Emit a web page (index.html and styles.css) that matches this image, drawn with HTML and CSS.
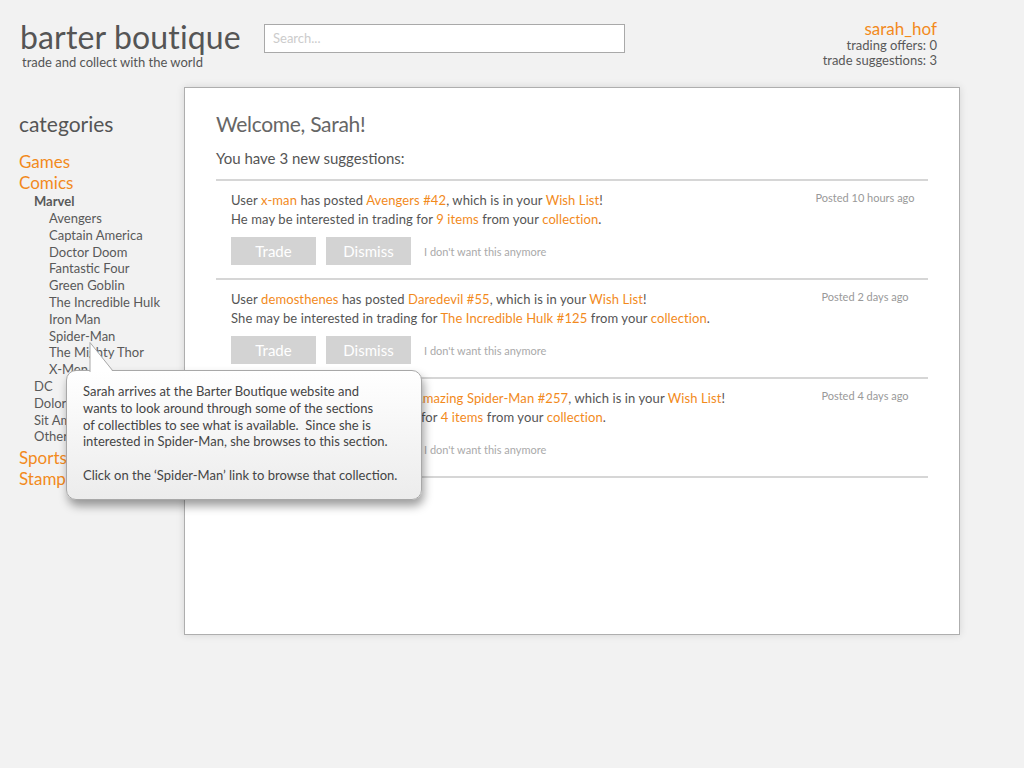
FILE: index.html
```html
<!DOCTYPE html>
<html>
<head>
<meta charset="utf-8">
<link rel="stylesheet" href="styles.css">
</head>
<body>
<header class="top">
  <div class="brand">
    <div class="logo">barter boutique</div>
    <div class="tagline">trade and collect with the world</div>
  </div>
  <div class="search">Search...</div>
  <div class="user">
    <div class="username">sarah_hof</div>
    <div class="stat">trading offers: 0</div>
    <div class="stat">trade suggestions: 3</div>
  </div>
</header>
<div class="main">
  <nav class="sidebar">
    <div class="cat-title">categories</div>
    <div class="cat">Games</div>
    <div class="cat">Comics</div>
    <div class="sub bold">Marvel</div>
    <div class="subsub">Avengers</div>
    <div class="subsub">Captain America</div>
    <div class="subsub">Doctor Doom</div>
    <div class="subsub">Fantastic Four</div>
    <div class="subsub">Green Goblin</div>
    <div class="subsub">The Incredible Hulk</div>
    <div class="subsub">Iron Man</div>
    <div class="subsub">Spider-Man</div>
    <div class="subsub">The Mighty Thor</div>
    <div class="subsub">X-Men</div>
    <div class="sub">DC</div>
    <div class="sub">Dolorem</div>
    <div class="sub">Sit Amet</div>
    <div class="sub">Other</div>
    <div class="cat cat-sports">Sports</div>
    <div class="cat">Stamps</div>
  </nav>
  <section class="panel">
    <h1 class="welcome">Welcome, Sarah!</h1>
    <p class="intro">You have 3 new suggestions:</p>
    <div class="list">
      <div class="item">
        <div class="item-body">
          <div class="line">User <span class="o">x-man</span> has posted <span class="o">Avengers #42</span>, which is in your <span class="o">Wish List</span>!</div>
          <div class="line">He may be interested in trading for <span class="o">9 items</span> from your <span class="o">collection</span>.</div>
          <div class="actions">
            <span class="btn">Trade</span>
            <span class="btn">Dismiss</span>
            <span class="nothanks">I don't want this anymore</span>
          </div>
        </div>
        <div class="posted">Posted 10 hours ago</div>
      </div>
      <div class="item">
        <div class="item-body">
          <div class="line">User <span class="o">demosthenes</span> has posted <span class="o">Daredevil #55</span>, which is in your <span class="o">Wish List</span>!</div>
          <div class="line">She may be interested in trading for <span class="o">The Incredible Hulk #125</span> from your <span class="o">collection</span>.</div>
          <div class="actions">
            <span class="btn">Trade</span>
            <span class="btn">Dismiss</span>
            <span class="nothanks">I don't want this anymore</span>
          </div>
        </div>
        <div class="posted">Posted 2 days ago</div>
      </div>
      <div class="item">
        <div class="item-body">
          <div class="line">User <span class="o">web_head</span> has posted <span class="o">The Amazing Spider-Man #257</span>, which is in your <span class="o">Wish List</span>!</div>
          <div class="line">She may be interested in trading for <span class="o">4 items</span> from your <span class="o">collection</span>.</div>
          <div class="actions">
            <span class="btn">Trade</span>
            <span class="btn">Dismiss</span>
            <span class="nothanks">I don't want this anymore</span>
          </div>
        </div>
        <div class="posted">Posted 4 days ago</div>
      </div>
    </div>
  </section>
</div>
<div class="tooltip">
  <svg class="tip-arrow" width="26" height="30" viewBox="0 0 26 30">
    <polygon points="1,0 1,30 24,30" fill="#ffffff"/>
    <polyline points="1,30 1,0.5 24,29" fill="none" stroke="#a8a8a8" stroke-width="1"/>
  </svg>
  <p>Sarah arrives at the Barter Boutique website and<br>wants to look around through some of the sections<br>of collectibles to see what is available.&nbsp; Since she is<br>interested in Spider-Man, she browses to this section.</p>
  <p>Click on the ‘Spider-Man’ link to browse that collection.</p>
</div>
</body>
</html>
```
FILE: styles.css
```css
* { box-sizing: border-box; }
html, body { margin: 0; padding: 0; }
body {
  background: #f2f2f2;
  font-family: "Lato", "Open Sans", sans-serif;
  color: #595959;
  width: 1024px;
  height: 768px;
  position: relative;
  overflow: hidden;
}
.top {
  display: flex;
  align-items: flex-start;
  height: 87px;
  padding: 0 87px 0 20px;
}
.brand { width: 244px; padding-top: 18px; }
.logo { font-size: 32px; line-height: 38px; color: #555; white-space: nowrap; letter-spacing: 0.15px; }
.tagline { font-size: 13px; line-height: 15px; margin-top: -1px; padding-left: 2px; color: #555; white-space: nowrap; }
.search {
  margin-top: 24px;
  width: 361px;
  height: 29px;
  background: #fff;
  border: 1px solid #a9a9a9;
  color: #ccc;
  font-size: 13px;
  line-height: 27px;
  padding-left: 8px;
}
.user { margin-left: auto; text-align: right; padding-top: 20px; }
.username { font-size: 17px; line-height: 18px; color: #f28a1c; }
.stat { font-size: 13px; line-height: 15px; }

.main { display: flex; align-items: flex-start; }
.sidebar { width: 184px; padding: 24px 0 0 19px; }
.cat-title { font-size: 21px; line-height: 26px; margin-bottom: 14px; color: #555; }
.cat { font-size: 17px; line-height: 21px; color: #f28a1c; }
.cat-sports { margin-top: 2px; }
.sub { font-size: 13px; line-height: 16.8px; padding-left: 15px; }
.sub.bold { font-weight: bold; line-height: 17px; }
.subsub { font-size: 13px; line-height: 16.8px; padding-left: 30px; }

.panel {
  width: 776px;
  height: 548px;
  background: #fff;
  border: 1px solid #aeaeae;
  box-shadow: 0 0 8px rgba(0, 0, 0, 0.12);
  padding: 23px 31px 0 31px;
}
.welcome { margin: 0; font-weight: normal; font-size: 21px; line-height: 26px; color: #666; letter-spacing: -0.3px; }
.intro { margin: 12px 0 12px; font-size: 15px; line-height: 18px; color: #555; }
.list { border-top: 2px solid #d6d6d6; }
.item {
  display: flex;
  border-bottom: 2px solid #d6d6d6;
  padding: 10px 0 13px 15px;
}
.item-body { flex: 1; }
.line { font-size: 13px; line-height: 19px; color: #555; white-space: nowrap; letter-spacing: 0.1px; }
.o { color: #f28a1c; }
.actions { display: flex; align-items: center; gap: 10px; margin-top: 8px; }
.btn {
  width: 85px;
  height: 28px;
  background: #d3d3d3;
  color: #fff;
  font-size: 15px;
  line-height: 28px;
  text-align: center;
}
.nothanks { font-size: 11px; color: #aaa; margin-left: 3px; }
.posted { width: 126px; text-align: center; font-size: 11px; line-height: 13px; color: #999; }

.tooltip {
  position: absolute;
  left: 66px;
  top: 370px;
  width: 356px;
  height: 130px;
  border: 1px solid #a8a8a8;
  border-radius: 10px;
  background: linear-gradient(#ffffff, #ececec);
  box-shadow: 2px 6px 10px rgba(0, 0, 0, 0.38);
  padding: 12px 10px 0 16px;
  color: #444;
  font-size: 13px;
  line-height: 16.8px;
}
.tooltip p { margin: 0 0 16.8px; white-space: nowrap; }
.tip-arrow { position: absolute; left: 22px; top: -29px; display: block; }
```
